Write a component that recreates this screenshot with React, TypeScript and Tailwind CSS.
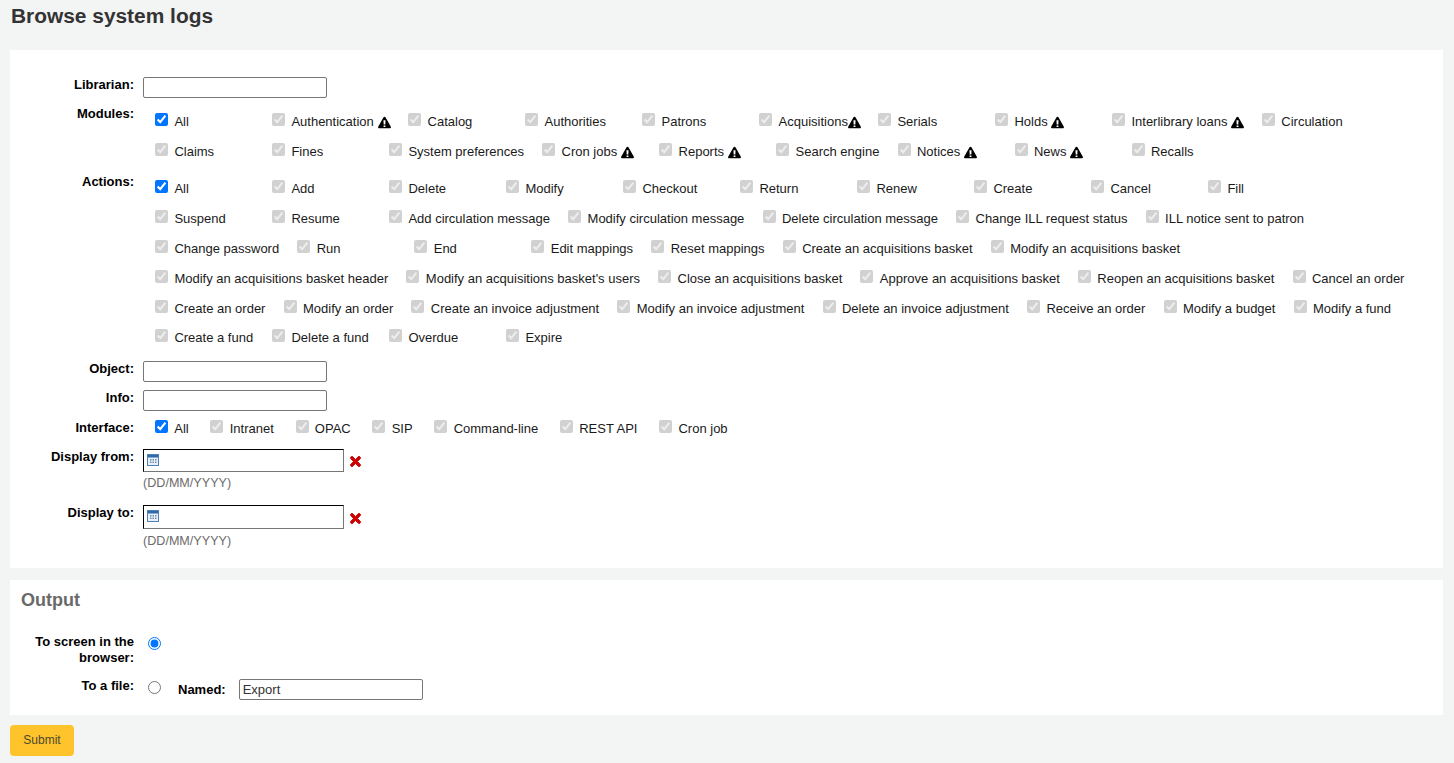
import { FaTimes } from "react-icons/fa";

type Item = { t: string; w?: boolean; on?: boolean };

const modules: Item[] = [
  { t: "All", on: true }, { t: "Authentication", w: true }, { t: "Catalog" }, { t: "Authorities" }, { t: "Patrons" },
  { t: "Acquisitions", w: true }, { t: "Serials" }, { t: "Holds", w: true }, { t: "Interlibrary loans", w: true }, { t: "Circulation" },
  { t: "Claims" }, { t: "Fines" }, { t: "System preferences" }, { t: "Cron jobs", w: true }, { t: "Reports", w: true },
  { t: "Search engine" }, { t: "Notices", w: true }, { t: "News", w: true }, { t: "Recalls" },
];

const actions: Item[] = [
  "All", "Add", "Delete", "Modify", "Checkout", "Return", "Renew", "Create", "Cancel", "Fill",
  "Suspend", "Resume", "Add circulation message", "Modify circulation message", "Delete circulation message", "Change ILL request status", "ILL notice sent to patron",
  "Change password", "Run", "End", "Edit mappings", "Reset mappings", "Create an acquisitions basket", "Modify an acquisitions basket",
  "Modify an acquisitions basket header", "Modify an acquisitions basket's users", "Close an acquisitions basket", "Approve an acquisitions basket", "Reopen an acquisitions basket", "Cancel an order",
  "Create an order", "Modify an order", "Create an invoice adjustment", "Modify an invoice adjustment", "Delete an invoice adjustment", "Receive an order", "Modify a budget", "Modify a fund",
  "Create a fund", "Delete a fund", "Overdue", "Expire",
].map((t, i) => ({ t, on: i === 0 }));

const interfaces = ["All", "Intranet", "OPAC", "SIP", "Command-line", "REST API", "Cron job"];

function Check({ on }: { on?: boolean }) {
  return <input type="checkbox" checked disabled={!on} readOnly className="m-0 w-[13px] h-[13px] shrink-0" />;
}

function Warn({ tight }: { tight: boolean }) {
  return (
    <svg className={`shrink-0 ${tight ? "ml-0 mr-[-1px]" : "ml-[3.8px] mr-[-0.6px]"}`} width="13" height="13" viewBox="0 0 14 13">
      <path
        fill="#000"
        fillRule="evenodd"
        d="M7 0.4C7.5 0.4 7.9 0.7 8.2 1.1L13.7 10.9C14.3 11.9 13.7 12.8 12.7 12.8H1.3C0.3 12.8 -0.3 11.9 0.3 10.9L5.8 1.1C6.1 0.7 6.5 0.4 7 0.4ZM5.9 4.2L6.1 8.6H7.9L8.1 4.2ZM6 9.6V11.4H8V9.6Z"
      />
    </svg>
  );
}

function Entry({ item, h }: { item: Item; h: string }) {
  return (
    <div className={`flex items-start min-w-[117px] pt-[7px] pr-[18.15px] ${h}`}>
      <Check on={item.on} />
      <span className="ml-[6.4px] mt-[1px] leading-4 whitespace-nowrap flex items-center h-4 text-[#1a1a1a]">
        {item.t}
        {item.w && <Warn tight={item.t === "Acquisitions"} />}
      </span>
    </div>
  );
}

function Label({ children, className = "" }: { children: React.ReactNode; className?: string }) {
  return <div className={`w-[124px] shrink-0 text-right font-bold leading-4 text-black ${className}`}>{children}</div>;
}

function TextInput({ value = "" }: { value?: string }) {
  return (
    <input
      readOnly
      value={value}
      className="w-[184px] h-[21px] border border-[#767676] rounded-[2px] bg-white px-[3px] text-[13px] text-[#333] outline-none"
    />
  );
}

function DateRow({ label, cls, boxH, xGap, hintGap }: { label: string; cls: string; boxH: string; xGap: string; hintGap: string }) {
  return (
    <div className={`flex ${cls}`}>
      <Label>{label}</Label>
      <div className="ml-[9px]">
        <div className="flex items-center">
          <div className={`relative w-[201px] border border-[#767676] border-t-black border-l-black bg-white ${boxH}`}>
            <svg className="absolute left-[3px] top-[4px]" width="12" height="12" viewBox="0 0 12 12">
              <rect x="0.5" y="0.5" width="11" height="11" fill="#e8eff7" stroke="#4f81b8" />
              <rect x="1" y="1" width="10" height="2.5" fill="#2f6aa8" />
              <g fill="#6d8fb5">
                <rect x="3" y="5" width="1.5" height="1.5" />
                <rect x="5.5" y="5" width="1.5" height="1.5" />
                <rect x="8" y="5" width="1.5" height="1.5" />
                <rect x="3" y="7.5" width="1.5" height="1.5" />
                <rect x="5.5" y="7.5" width="1.5" height="1.5" />
                <rect x="8" y="7.5" width="1.5" height="1.5" />
              </g>
            </svg>
          </div>
          <FaTimes className={`ml-[4px] text-[#cc0000] text-[15px] stroke-[#cc0000] stroke-[30px] ${xGap}`} />
        </div>
        <div className={`leading-4 text-[12.6px] text-[#6c6c6c] ${hintGap}`}>(DD/MM/YYYY)</div>
      </div>
    </div>
  );
}

export default function App() {
  return (
    <div className="min-h-[763px] bg-[#f3f4f4] pl-[10px] pr-[11px] text-[13px] font-['Liberation_Sans',Arial,sans-serif] overflow-hidden">
      <h1 className="pt-[4px] h-[50px] text-[20.9px] leading-6 font-bold text-[#333]">
        <span className="relative left-[1px]">Browse system logs</span>
      </h1>

      <section className="bg-white h-[518px] pt-[27px]">
        <div className="flex">
          <Label>Librarian:</Label>
          <div className="ml-[9px]"><TextInput /></div>
        </div>

        <div className="flex mt-[8px]">
          <Label>Modules:</Label>
          <div className="ml-[21px] flex-1 flex flex-wrap pr-[9px] h-[60px]">
            {modules.map((m) => <Entry key={m.t} item={m} h="h-[30px]" />)}
          </div>
        </div>

        <div className="flex mt-[6.9px]">
          <Label className="mt-[1px]">Actions:</Label>
          <div className="ml-[21px] flex-1 flex flex-wrap pr-[9px] h-[179.1px]">
            {actions.map((m) => <Entry key={m.t} item={m} h="h-[29.91px]" />)}
          </div>
        </div>

        <div className="flex mt-[9px]">
          <Label>Object:</Label>
          <div className="ml-[9px]"><TextInput /></div>
        </div>
        <div className="flex mt-[8px]">
          <Label>Info:</Label>
          <div className="ml-[9px]"><TextInput /></div>
        </div>

        <div className="flex mt-[2px]">
          <Label className="mt-[7px]">Interface:</Label>
          <div className="ml-[21px] flex">
            {interfaces.map((t, i) => (
              <div key={t} className="flex items-start pt-[7px] pr-[21.7px] h-[30px]">
                <Check on={i === 0} />
                <span className="ml-[6.3px] mt-[1px] leading-4 whitespace-nowrap text-[#1a1a1a]">{t}</span>
              </div>
            ))}
          </div>
        </div>

        <DateRow label="Display from:" cls="mt-[6px]" boxH="h-[23px]" xGap="mt-[2px]" hintGap="mt-[3px]" />
        <DateRow label="Display to:" cls="mt-[14px]" boxH="h-[24px]" xGap="mt-[3px]" hintGap="mt-[4px]" />
      </section>

      <section className="bg-white mt-[12px] h-[135px] pt-[9px]">
        <h2 className="pl-[11px] text-[18px] leading-[22px] font-bold text-[#696969]">Output</h2>
        <div className="flex mt-[22px]">
          <Label className="mt-[1px]">To screen in the browser:</Label>
          <div className="ml-[14px] mt-[4px]">
            <input type="radio" name="out" defaultChecked className="m-0 w-[13px] h-[13px] block" />
          </div>
        </div>
        <div className="flex mt-[11px]">
          <Label className="mt-[1px]">To a file:</Label>
          <div className="ml-[14px] mt-[4px]">
            <input type="radio" name="out" className="m-0 w-[13px] h-[13px] block" />
          </div>
          <span className="ml-[17px] mt-[5px] font-bold leading-4 text-black">Named:</span>
          <div className="ml-[13px] mt-[2px]"><TextInput value="Export" /></div>
        </div>
      </section>

      <button className="mt-[10px] w-[64px] h-[31px] pb-[2px] bg-[#ffc32b] rounded-[4px] text-[12px] text-[#4a4a32] block">Submit</button>
    </div>
  );
}
